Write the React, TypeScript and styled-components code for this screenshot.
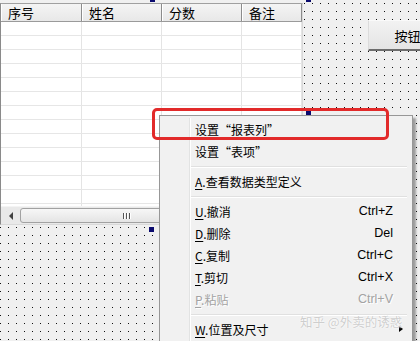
import React from 'react';
import styled, { createGlobalStyle } from 'styled-components';

const GlobalStyle = createGlobalStyle`
  html, body {
    margin: 0;
    padding: 0;
    background: #f0f0f0;
  }
  body {
    font-family: "Noto Sans CJK SC", "Liberation Sans", sans-serif;
    font-size: 12px;
    color: #000;
  }
`

// designer canvas with the dot grid
const Canvas = styled('div')`
  position: relative;
  width: 420px;
  height: 341px;
  overflow: hidden;
  background-color: #f0f0f0;
  background-image: conic-gradient(from 270deg at 1px 1px, #111 90deg, transparent 0);
  background-size: 8px 8px;
  background-position: 0 3px;
`

const GridControl = styled('div')`
  position: absolute;
  left: 0;
  top: 3px;
  width: 303px;
  height: 222px;
  box-sizing: border-box;
  display: flex;
  flex-direction: column;
  background: #fff;
  border-top: 1px solid #a0a0a0;
  border-left: 1px solid #8a8a8a;
  border-right: 1px solid #d9d9d9;
  border-bottom: 1px solid #d9d9d9;
`

const columns = '81px 80px 80px 1fr'

const HeaderRow = styled('div')`
  display: grid;
  grid-template-columns: ${columns};
  height: 17px;
  flex: none;
  background: linear-gradient(#f4f4f4, #e8e8e8);
  border-bottom: 1px solid #9a9a9a;
`

const HeaderCell = styled('div')`
  box-sizing: border-box;
  padding-left: 7px;
  font-size: 13px;
  line-height: 18px;
  border-right: 1px solid #8c8c8c;
  box-shadow: inset 1px 0 0 #fff;
  white-space: nowrap;
  overflow: hidden;
`

const Body = styled('div')`
  flex: 1;
  overflow: hidden;
`

const Row = styled('div')`
  display: grid;
  grid-template-columns: ${columns};
  height: 13px;
  border-bottom: 1px solid #e6e6e6;
`

const Cell = styled('div')`
  border-right: 1px solid #e4e4e4;
`

const ScrollBar = styled('div')`
  display: flex;
  height: 17px;
  flex: none;
  background: #e9e9e9;
  border-top: 1px solid #f4f4f4;
`

const ArrowButton = styled('div')`
  width: 19px;
  display: flex;
  align-items: center;
  justify-content: center;
  &::before {
    content: '';
    border-top: 4px solid transparent;
    border-bottom: 4px solid transparent;
    border-right: 4px solid #404040;
  }
`

const Thumb = styled('div')`
  width: 212px;
  margin: 1px 0;
  box-sizing: border-box;
  border: 1px solid #a2a2a2;
  border-radius: 3px;
  background: linear-gradient(#f7f7f7, #e4e4e4);
  display: flex;
  align-items: center;
  justify-content: center;
  gap: 2px;
`

const Grip = styled('span')`
  width: 1px;
  height: 6px;
  background: #555;
  box-shadow: 1px 0 0 #fff;
`

const Handle = styled('div')<{ $x: number; $y: number }>`
  position: absolute;
  left: ${p => p.$x}px;
  top: ${p => p.$y}px;
  width: 5px;
  height: 5px;
  background: #0a0a6e;
`

const FormButton = styled('div')`
  position: absolute;
  left: 368px;
  top: 20px;
  width: 78px;
  height: 31px;
  box-sizing: border-box;
  display: flex;
  align-items: center;
  justify-content: center;
  font-size: 13px;
  background: linear-gradient(#f2f2f2, #e4e4e4);
  border-top: 1px solid #fafafa;
  border-left: 1px solid #dcdcdc;
  border-bottom: 2px solid #6c6c6c;
  padding-top: 1px;
`

const Menu = styled('div')`
  position: absolute;
  left: 159px;
  top: 115px;
  width: 254px;
  height: 240px;
  box-sizing: border-box;
  padding: 2px;
  background: #f1f1f1;
  border: 1px solid #979797;
  box-shadow: 3px 3px 2px rgba(0, 0, 0, 0.35);

  &::before {
    content: '';
    position: absolute;
    left: 29px;
    top: 2px;
    bottom: 2px;
    width: 1px;
    background: #e2e3e3;
    box-shadow: 1px 0 0 #fff;
  }
`

const MenuItem = styled('div')<{ $disabled?: boolean }>`
  display: flex;
  align-items: center;
  height: 22px;
  padding: 0 17px 0 33px;
  white-space: nowrap;
  color: ${p => (p.$disabled ? '#a3a3a3' : '#000')};
  text-shadow: ${p => (p.$disabled ? '1px 1px 0 #fff' : 'none')};

  u {
    text-underline-offset: 2px;
  }
`

const Label = styled('span')`
  flex: 1;
`

const Shortcut = styled('span')`
  font-family: "Liberation Sans", sans-serif;
  font-size: 12.5px;
`

const SubArrow = styled('span')`
  margin-right: -10px;
  border-top: 3.5px solid transparent;
  border-bottom: 3.5px solid transparent;
  border-left: 4px solid #000;
`

const Separator = styled('div')`
  height: 8px;
  display: flex;
  align-items: center;
  margin: 0 3px 0 28px;
  &::after {
    content: '';
    flex: 1;
    height: 1px;
    background: #e0e0e0;
    box-shadow: 0 1px 0 #fff;
  }
`

const Callout = styled('div')`
  position: absolute;
  left: 152px;
  top: 108px;
  width: 237px;
  height: 32px;
  box-sizing: border-box;
  border: 3px solid #e22a2a;
  border-radius: 5px;
  pointer-events: none;
`

const Watermark = styled('div')`
  position: absolute;
  left: 300px;
  top: 312px;
  font-size: 12.5px;
  color: rgba(200, 200, 200, 0.9);
  text-shadow: 0 0 1px #fff, 0 0 2px #fff;
  white-space: nowrap;
  pointer-events: none;
`

const headers = ['序号', '姓名', '分数', '备注']

function App() {
  const rows = Array.from({ length: 15 }, (_, i) => i)

  return (
    <>
      <GlobalStyle />
      <Canvas>
        <GridControl>
          <HeaderRow>
            {headers.map(h => (
              <HeaderCell key={h}>{h}</HeaderCell>
            ))}
          </HeaderRow>
          <Body>
            {rows.map(r => (
              <Row key={r}>
                <Cell />
                <Cell />
                <Cell />
                <Cell />
              </Row>
            ))}
          </Body>
          <ScrollBar>
            <ArrowButton />
            <Thumb>
              <Grip />
              <Grip />
              <Grip />
            </Thumb>
          </ScrollBar>
        </GridControl>

        <Handle $x={150} $y={-3} />
        <Handle $x={306} $y={-3} />
        <Handle $x={306} $y={111} />
        <Handle $x={149} $y={227} />

        <FormButton>按钮</FormButton>

        <Menu>
          <MenuItem><Label>设置“报表列”</Label></MenuItem>
          <MenuItem><Label>设置“表项”</Label></MenuItem>
          <Separator />
          <MenuItem><Label><u>A</u>.查看数据类型定义</Label></MenuItem>
          <Separator />
          <MenuItem><Label><u>U</u>.撤消</Label><Shortcut>Ctrl+Z</Shortcut></MenuItem>
          <MenuItem><Label><u>D</u>.删除</Label><Shortcut>Del</Shortcut></MenuItem>
          <MenuItem><Label><u>C</u>.复制</Label><Shortcut>Ctrl+C</Shortcut></MenuItem>
          <MenuItem><Label><u>T</u>.剪切</Label><Shortcut>Ctrl+X</Shortcut></MenuItem>
          <MenuItem $disabled><Label><u>P</u>.粘贴</Label><Shortcut>Ctrl+V</Shortcut></MenuItem>
          <Separator />
          <MenuItem><Label><u>W</u>.位置及尺寸</Label><SubArrow /></MenuItem>
        </Menu>

        <Callout />
        <Watermark>知乎 @外卖的诱惑</Watermark>
      </Canvas>
    </>
  );
}

export default App;
